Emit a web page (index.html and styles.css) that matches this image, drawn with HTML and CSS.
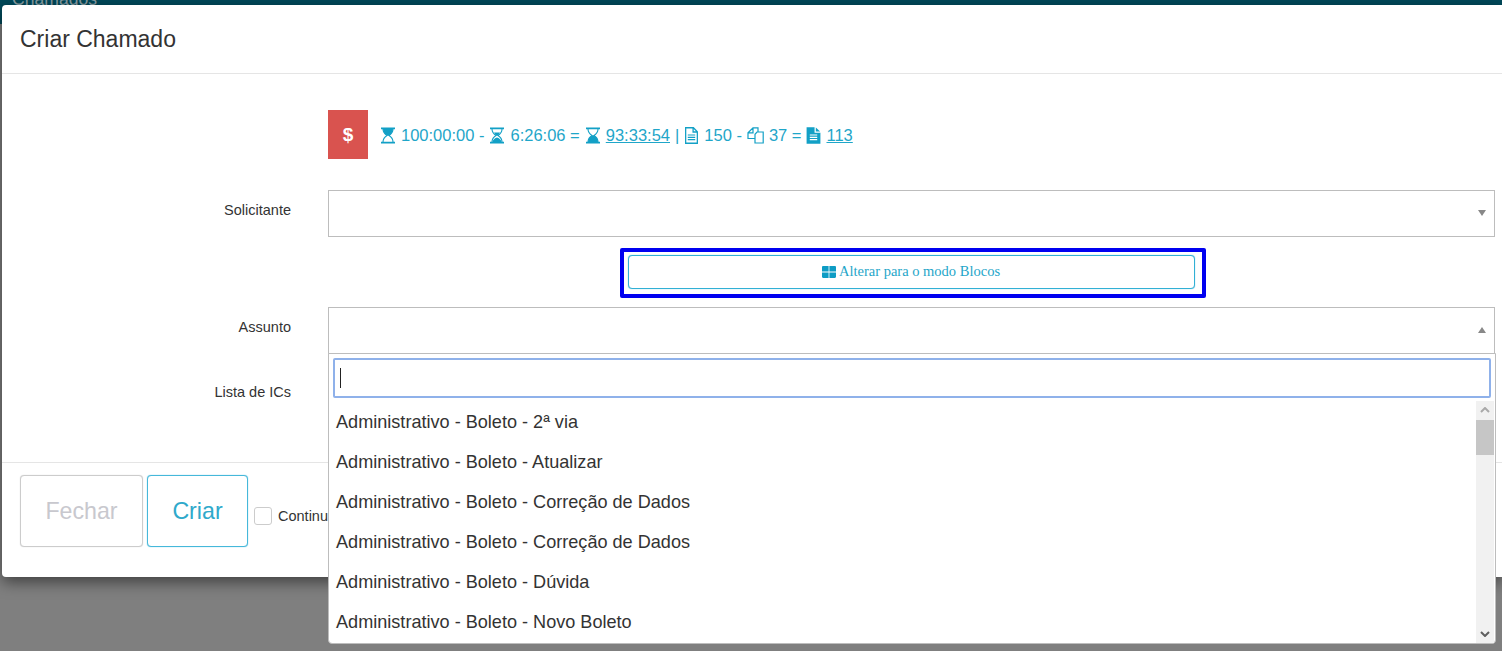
FILE: index.html
```html
<!DOCTYPE html>
<html lang="pt">
<head>
<meta charset="utf-8">
<title>Criar Chamado</title>
<link rel="stylesheet" href="styles.css">
</head>
<body>
<svg class="defs" width="0" height="0" aria-hidden="true">
  <defs>
    <symbol id="hg-frame" viewBox="0 0 16 17">
      <path d="M1 .5h14v1.700H1zM1 14.800h14v1.700H1z" fill="currentColor"/>
      <path d="M3 2c0 3 2 5.200 4 6.500-2 1.300-4 3.500-4 6.500M13 2c0 3-2 5.200-4 6.500 2 1.300 4 3.500 4 6.500" fill="none" stroke="currentColor" stroke-width="1.100"/>
    </symbol>
  </defs>
</svg>
<div class="topbar"><span class="topbar-text">Chamados</span></div>
<main class="modal">
  <header class="modal-header"><h1 class="modal-title">Criar Chamado</h1></header>
  <div class="modal-body">
    <div class="row info-row">
      <div class="label"></div>
      <div class="field info">
        <span class="money">$</span>
        <span class="stats">
          <svg class="ic" viewBox="0 0 16 17"><use href="#hg-frame"/><path d="M3 2h10c0 3-2 5.200-4 6.500H7C5 7.200 3 5 3 2z" fill="currentColor"/></svg>
          <span>100:00:00 -</span>
          <svg class="ic" viewBox="0 0 16 17"><use href="#hg-frame"/><path d="M5 5.500h6c-.6 1.200-1.300 2-2 3H7c-.7-1-1.400-1.800-2-3zM3.600 15c.2-2 1.500-3.500 4.400-4.500 2.900 1 4.200 2.500 4.400 4.500z" fill="currentColor"/></svg>
          <span>6:26:06 =</span>
          <svg class="ic" viewBox="0 0 16 17"><use href="#hg-frame"/><path d="M3 15c0-3 2-5.200 4-6.500h2c2 1.300 4 3.500 4 6.500z" fill="currentColor"/></svg>
          <a class="stat-link">93:33:54</a>
          <span>|</span>
          <svg class="ic doc" viewBox="0 0 14 16"><path d="M1.500.700h7.300l3.700 3.700v10.900h-11z M8.500.700v4h4" fill="none" stroke="currentColor" stroke-width="1.200"/><path d="M3.500 7.500h7M3.500 9.700h7M3.500 11.900h7" stroke="currentColor" stroke-width="1.100"/></svg>
          <span>150 -</span>
          <svg class="ic copy" viewBox="0 0 17 17"><path d="M6 .8h5v4.200h5.200v11H8v-4.500H1V5.800z M6 .8v5H1 M11 5H10L8 7.300v4.200" fill="none" stroke="currentColor" stroke-width="1.200"/></svg>
          <span>37 =</span>
          <svg class="ic doc" viewBox="0 0 14 16"><path d="M.5.300h7.500v5h5.500v10.400H.5z" fill="currentColor"/><path d="M9.200.5l4 3.800h-4z" fill="currentColor"/><path d="M3.500 7.500h7M3.500 9.700h7M3.500 11.900h7" stroke="#fff" stroke-width="1.100"/></svg>
          <a class="stat-link">113</a>
        </span>
      </div>
    </div>
    <div class="row select-row">
      <div class="label">Solicitante</div>
      <div class="field"><div class="select"><span class="caret caret-down"></span></div></div>
    </div>
    <div class="row toggle-row">
      <div class="label"></div>
      <div class="field toggle-field">
        <div class="highlight">
          <button class="toggle-btn" type="button">
            <svg class="grid-ic" viewBox="0 0 14 12"><path d="M0 1.200C0 .5.500 0 1.200 0h5.400v5.600H0zM7.400 0h5.400c.7 0 1.200.5 1.200 1.200v4.400H7.400zM0 6.400h6.600V12H1.200C.5 12 0 11.500 0 10.800zM7.400 6.400H14v4.400c0 .7-.5 1.200-1.200 1.200H7.400z" fill="currentColor"/></svg>
            Alterar para o modo Blocos
          </button>
        </div>
      </div>
    </div>
    <div class="row select-row assunto-row">
      <div class="label">Assunto</div>
      <div class="field"><div class="select"><span class="caret caret-up"></span></div></div>
    </div>
    <div class="row ics-row">
      <div class="label">Lista de ICs</div>
      <div class="field"></div>
    </div>
  </div>
  <footer class="modal-footer">
    <button class="btn btn-close" type="button">Fechar</button>
    <button class="btn btn-create" type="button">Criar</button>
    <label class="continue"><span class="checkbox"></span>Continuar criando</label>
  </footer>
</main>
<div class="dropdown">
  <div class="search"><span class="cursor"></span></div>
  <div class="results">
    <ul class="options">
      <li>Administrativo - Boleto - 2ª via</li>
      <li>Administrativo - Boleto - Atualizar</li>
      <li>Administrativo - Boleto - Correção de Dados</li>
      <li>Administrativo - Boleto - Correção de Dados</li>
      <li>Administrativo - Boleto - Dúvida</li>
      <li>Administrativo - Boleto - Novo Boleto</li>
    </ul>
    <div class="scrollbar">
      <svg class="arrow" viewBox="0 0 10 6"><path d="M1 5l4-4 4 4" fill="none" stroke="#a9a9a9" stroke-width="2"/></svg>
      <div class="track"><div class="thumb"></div></div>
      <svg class="arrow" viewBox="0 0 10 6"><path d="M1 1l4 4 4-4" fill="none" stroke="#5f5f5f" stroke-width="2"/></svg>
    </div>
  </div>
</div>
</body>
</html>
```

FILE: styles.css
```css
* { box-sizing: border-box; }
html, body { margin: 0; height: 651px; overflow: hidden; }
body {
  position: relative;
  background: #7f7f7f;
  font-family: "Liberation Sans", Arial, sans-serif;
  color: #333;
}
.defs { position: absolute; }
.topbar {
  position: absolute;
  inset: 0 0 auto 0;
  height: 24px;
  background: #00495a;
  overflow: hidden;
}
.topbar-text {
  position: absolute;
  left: 12px;
  top: -11px;
  font-size: 17.6px;
  color: #8a9ea3;
}
.modal {
  position: absolute;
  left: 2px;
  top: 5px;
  right: 0;
  height: 572px;
  background: #fff;
  border-radius: 4px 0 0 4px;
  box-shadow: 0 5px 15px rgba(0, 0, 0, .5);
  display: flex;
  flex-direction: column;
}
.modal-header {
  height: 69px;
  padding: 21px 18px 0;
  border-bottom: 1px solid #e5e5e5;
}
.modal-title {
  margin: 0;
  font-size: 23px;
  font-weight: 400;
  line-height: 26px;
  color: #333;
}
.modal-body {
  height: 389px;
  padding-top: 36px;
  border-bottom: 1px solid #e5e5e5;
  display: flex;
  flex-direction: column;
}
.row { display: flex; }
.label {
  width: 289px;
  text-align: right;
  font-size: 14.5px;
  color: #333;
}
.field { margin-left: 37px; width: 1167px; }
.info { display: flex; align-items: center; gap: 12px; }
.info-row { height: 50px; }
.money {
  align-self: flex-start;
  width: 40px;
  height: 49px;
  background: #d9534f;
  color: #fff;
  font-size: 19px;
  font-weight: 700;
  display: flex;
  align-items: center;
  justify-content: center;
}
.stats {
  display: flex;
  align-items: center;
  gap: 5px;
  font-size: 16.5px;
  color: #1fa6c9;
  padding-top: 1px;
}
.ic { width: 16px; height: 17px; color: #12a0c6; flex: none; }
.doc { width: 15px; }
.copy { width: 17px; }
.stat-link { text-decoration: underline; }
.select-row { margin-top: 30px; height: 47px; }
.select-row .label { padding-top: 12px; }
.select {
  height: 47px;
  border: 1px solid #bdbdbd;
  background: #fff;
  position: relative;
}
.caret {
  position: absolute;
  right: 8px;
  top: 19px;
  border-left: 4.500px solid transparent;
  border-right: 4.500px solid transparent;
}
.caret-down { border-top: 6px solid #888; }
.caret-up { border-bottom: 6px solid #888; }
.toggle-row { margin-top: 11px; height: 50px; }
.toggle-field { display: flex; justify-content: center; padding-left: 2px; }
.highlight {
  width: 586px;
  height: 50px;
  border: 4px solid #0000f0;
  border-radius: 2px;
  padding: 3px 7px 3px 4px;
  background: #fff;
}
.toggle-btn {
  width: 100%;
  height: 34px;
  background: #fff;
  border: 1px solid #31b0d5;
  border-radius: 4px;
  box-shadow: 0 0 1px #46b8da;
  color: #1fa6c9;
  font-family: "Liberation Serif", "Times New Roman", serif;
  font-size: 14.5px;
  display: flex;
  align-items: center;
  justify-content: center;
  gap: 3px;
  padding: 0 0 1px;
}
.grid-ic { width: 14px; height: 12px; color: #0e9cc4; }
.assunto-row { margin-top: 9px; }
.ics-row { margin-top: 30px; }
.modal-footer {
  display: flex;
  align-items: flex-start;
  padding: 12px 18px 0;
  gap: 4px;
}
.btn {
  height: 72px;
  background: #fff;
  border-radius: 4px;
  font-family: inherit;
  font-size: 23.2px;
  padding: 0;
}
.btn-close { width: 123px; border: 1px solid #ccc; box-shadow: 0 0 1px #ccc; color: #c8c8ce; }
.btn-create { width: 101px; border: 1px solid #46b8da; box-shadow: 0 0 1px #46b8da; color: #2fa9cb; }
.continue {
  white-space: nowrap;
  display: flex;
  align-items: center;
  gap: 6px;
  font-size: 14.5px;
  margin: 32px 0 0 2px;
  color: #333;
}
.checkbox {
  flex: none;
  width: 18px;
  height: 18px;
  border: 1px solid #ccc;
  border-radius: 3px;
  background: #fff;
}
.dropdown {
  position: absolute;
  left: 328px;
  top: 353px;
  width: 1168px;
  height: 291px;
  background: #fff;
  border: 1px solid #bdbdbd;
  border-radius: 0 0 4px 4px;
  padding: 4px;
  display: flex;
  flex-direction: column;
}
.search {
  height: 40px;
  flex: none;
  border: 2px solid #8fb1ea;
  border-radius: 2px;
  position: relative;
}
.cursor {
  position: absolute;
  left: 5px;
  top: 8px;
  width: 1px;
  height: 20px;
  background: #222;
}
.results {
  flex: 1;
  min-height: 0;
  margin: 3px -4px -4px;
  display: flex;
  overflow: hidden;
}
.options {
  flex: 1;
  list-style: none;
  margin: 0;
  padding: 1px 0 0;
  overflow: hidden;
}
.options li {
  height: 40px;
  padding: 0 7px;
  font-size: 18.1px;
  line-height: 40px;
  color: #333;
  white-space: nowrap;
}
.scrollbar {
  width: 18px;
  margin-right: 1px;
  background: #f1f1f1;
  display: flex;
  flex-direction: column;
  align-items: center;
}
.arrow { width: 10px; height: 6px; margin: 6px 0; flex: none; }
.track { flex: 1; width: 100%; }
.thumb { height: 35px; margin-top: 1px; background: #c6c6c6; }
```
